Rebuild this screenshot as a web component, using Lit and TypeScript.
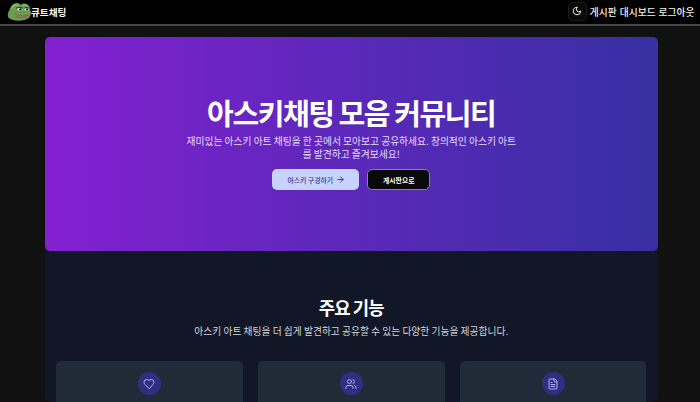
import { LitElement, html, css, svg } from "lit";
import { customElement } from "lit/decorators.js";

const stroke = (size: number, body: unknown, weight = 2) => html`<svg
  width=${size} height=${size} viewBox="0 0 24 24" fill="none" stroke="currentColor"
  stroke-width=${weight} stroke-linecap="round" stroke-linejoin="round">${body}</svg>`;

const heart = svg`<path d="M19 14c1.490-1.460 3-3.210 3-5.500A5.500 5.500 0 0 0 16.500 3c-1.760 0-3 .5-4.500 2-1.500-1.500-2.740-2-4.500-2A5.500 5.500 0 0 0 2 8.500c0 2.300 1.500 4.050 3 5.500l7 7Z"/>`;
const users = svg`<path d="M16 21v-2a4 4 0 0 0-4-4H6a4 4 0 0 0-4 4v2"/><circle cx="9" cy="7" r="4"/><path d="M22 21v-2a4 4 0 0 0-3-3.870M16 3.130a4 4 0 0 1 0 7.750"/>`;
const doc = svg`<path d="M15 2H6a2 2 0 0 0-2 2v16a2 2 0 0 0 2 2h12a2 2 0 0 0 2-2V7Z"/><path d="M14 2v4a2 2 0 0 0 2 2h4M10 9H8M16 13H8M16 17H8"/>`;
const arrow = svg`<path d="M5 12h14M12 5l7 7-7 7"/>`;
const moon = svg`<path d="M12 3a6 6 0 0 0 9 9 9 9 0 1 1-9-9Z"/>`;

@customElement("app-root")
export class AppRoot extends LitElement {
  static styles = css`
    :host {
      display: flex;
      flex-direction: column;
      height: 402px;
      overflow: hidden;
      background: #111111;
      color: #fff;
      font: 9.76px/14px "Noto Sans CJK KR", sans-serif;
      word-break: break-all;
    }
    * { box-sizing: border-box; }
    svg { display: block; flex: none; }
    header {
      flex: none;
      display: flex;
      align-items: center;
      justify-content: space-between;
      height: 26px;
      padding: 0 5.500px 2px 7px;
      background: #000;
      border-bottom: 2px solid #484848;
    }
    .brand { display: flex; align-items: center; font-weight: 700; font-size: 9.600px; white-space: nowrap; }
    .brand span { margin-left: -1px; padding-top: 1px; }
    nav { display: flex; align-items: center; gap: 3px; white-space: nowrap; font-weight: 500; color: #f2f2f2; }
    nav a { padding-top: 1px; }
    .toggle {
      display: grid;
      place-items: center;
      width: 19px;
      height: 19px;
      border: 1px solid #1c1c1c;
      border-radius: 4.500px;
      background: #090909;
    }
    main { flex: none; width: 613.500px; margin: 11px 0 0 44.500px; background: #111726; border-radius: 5px; }
    .hero {
      height: 214px;
      padding-top: 57px;
      border-radius: 5px;
      background: linear-gradient(90deg, #8420d2 0%, #5b28b9 50%, #3730a3 100%);
      display: flex;
      flex-direction: column;
      align-items: center;
      text-align: center;
    }
    h1 { margin: 0; font-size: 29.050px; line-height: 36px; letter-spacing: -0.050em; font-weight: 700; }
    .hero p { margin: 4.600px 0 0; width: 334px; line-height: 13.600px; color: #eadcfb; }
    .actions { display: flex; gap: 8px; margin-top: 7.400px; }
    .btn {
      display: flex;
      align-items: center;
      justify-content: center;
      gap: 3px;
      height: 21px;
      border-radius: 5px;
      font-size: 6.850px;
      font-weight: 500;
      white-space: nowrap;
    }
    .primary { width: 87px; padding-left: 1px; background: #c7d2fe; color: #3b328a; }
    .outline { width: 63px; background: #090909; border: 1px solid #8580b5; font-weight: 700; }
    .features { height: 151px; padding: 44px 11.500px 0; text-align: center; }
    h2 { margin: 0; font-size: 17.800px; line-height: 24px; letter-spacing: -0.050em; font-weight: 700; }
    .features p { margin: 5px 0 0; color: #d1d5db; white-space: nowrap; }
    .cards { display: grid; grid-template-columns: repeat(3, 1fr); gap: 15px; margin-top: 23px; }
    .card { height: 60px; padding-top: 11px; border-radius: 5px; background: #212a37; display: flex; justify-content: center; }
    .badge {
      display: grid;
      place-items: center;
      width: 23px;
      height: 23px;
      border-radius: 50%;
      background: #312e81;
      color: #a5b4fc;
    }
  `;

  private frog() {
    return html`<svg width="25" height="20" viewBox="0 0 25 20">
      <path d="M3 8C4 5 6 2 10 2c2 0 3 1 4 2 1-2 5-2 7 0 2 1 2 3 2 5l1 2c0 3-1 6-4 7-4 2-10 2-14 1-4-1-6-3-5-6 0-2 1-3 2-5Z" fill="#699c50"/>
      <path d="M4 8C6 4 9 3 12 5M15 5c2-2 5-1 6 1" fill="none" stroke="#84b566" stroke-width="1.500"/>
      <path d="M10 8c1-1.500 4-1.500 6 0l-1 1.600c-2 1-4 0-5-1.600ZM17 8c1-1.500 4-1 5 0l-1 1.600c-2 .6-3 0-4-1.600Z" fill="#dee9d8"/>
      <path d="M9 7.300c2-1.300 5-1.300 7 0M17 7.300c2-1 4-1 5.500 0" fill="none" stroke="#273d21" stroke-width="1"/>
      <circle cx="13.500" cy="8.400" r="1.200" fill="#101810"/><circle cx="20" cy="8.400" r="1.100" fill="#101810"/>
      <path d="M8 13c3 2 8 2 14 1M9 15.500c4 1.500 8 1.500 11 0" fill="none" stroke="#a06349" stroke-width="1.300" stroke-linecap="round"/>
    </svg>`;
  }

  render() {
    return html`
      <header>
        <div class="brand">${this.frog()}<span>큐트채팅</span></div>
        <nav>
          <div class="toggle">${stroke(10, moon, 2.3)}</div>
          <a>게시판</a><a>대시보드</a><a>로그아웃</a>
        </nav>
      </header>
      <main>
        <section class="hero">
          <h1>아스키채팅 모음 커뮤니티</h1>
          <p>재미있는 아스키 아트 채팅을 한 곳에서 모아보고 공유하세요. 창의적인 아스키 아트를 발견하고 즐겨보세요!</p>
          <div class="actions">
            <div class="btn primary">아스키 구경하기 ${stroke(9, arrow, 2.5)}</div>
            <div class="btn outline">게시판으로</div>
          </div>
        </section>
        <section class="features">
          <h2>주요 기능</h2>
          <p>아스키 아트 채팅을 더 쉽게 발견하고 공유할 수 있는 다양한 기능을 제공합니다.</p>
          <div class="cards">
            ${[heart, users, doc].map((i) => html`<div class="card"><div class="badge">${stroke(12, i)}</div></div>`)}
          </div>
        </section>
      </main>
    `;
  }
}
